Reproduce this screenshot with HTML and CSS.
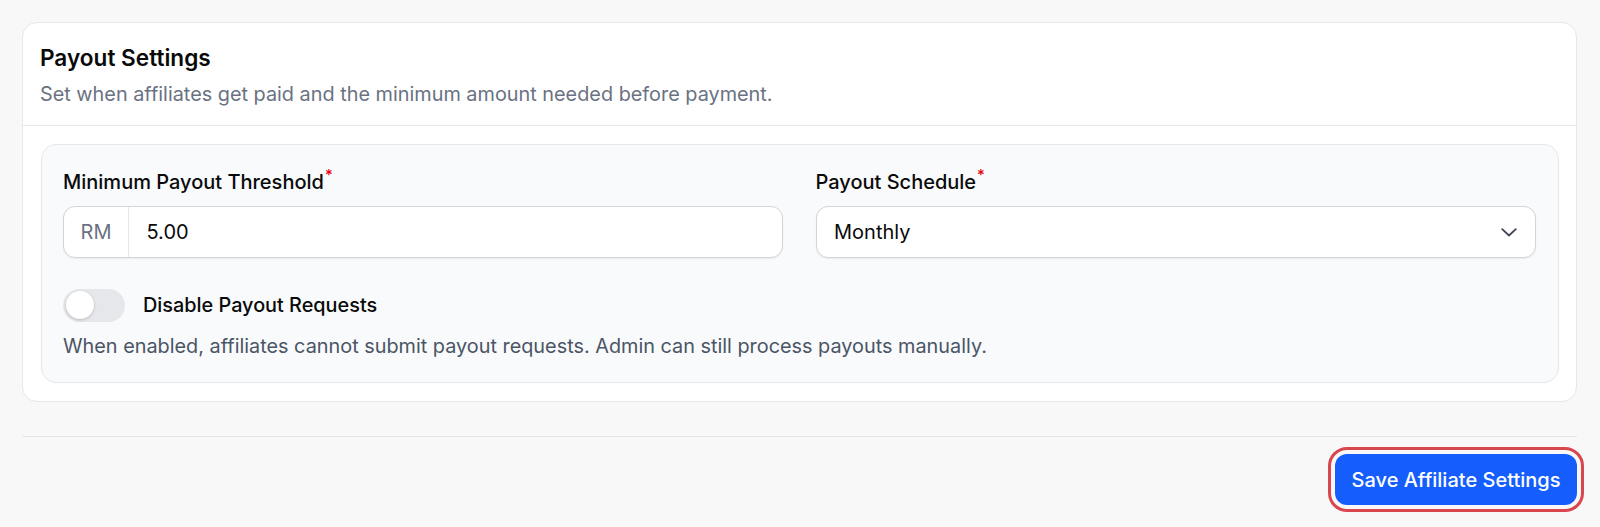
FILE: index.html
```html
<!DOCTYPE html>
<html>
<head>
<meta charset="utf-8">
<link rel="stylesheet" href="styles.css">
</head>
<body>
<div class="page">
  <section class="card">
    <header class="card-head">
      <h2 class="title">Payout Settings</h2>
      <p class="subtitle">Set when affiliates get paid and the minimum amount needed before payment.</p>
    </header>
    <div class="card-body">
      <div class="panel">
        <div class="grid">
          <div class="field">
            <label class="label">Minimum Payout Threshold<span class="req">*</span></label>
            <div class="input-group">
              <span class="addon">RM</span>
              <span class="input-value">5.00</span>
            </div>
          </div>
          <div class="field">
            <label class="label">Payout Schedule<span class="req">*</span></label>
            <div class="select">
              <span class="input-value">Monthly</span>
              <svg class="chev" width="20" height="20" viewBox="0 0 20 20"><path d="M3.2 7.2l6.8 6.3 6.8-6.3" fill="none" stroke="#3f4652" stroke-width="1.8" stroke-linecap="round" stroke-linejoin="round"/></svg>
            </div>
          </div>
        </div>
        <div class="toggle-row">
          <span class="toggle"><span class="knob"></span></span>
          <span class="toggle-label">Disable Payout Requests</span>
        </div>
        <p class="help">When enabled, affiliates cannot submit payout requests. Admin can still process payouts manually.</p>
      </div>
    </div>
  </section>
  <div class="footer">
    <button class="save">Save Affiliate Settings</button>
  </div>
</div>
</body>
</html>
```

FILE: styles.css
```css
* { box-sizing: border-box; }
html, body { margin: 0; padding: 0; }
body {
  background: #f8f8f8;
  font-family: Inter, "Noto Sans", "Liberation Sans", sans-serif;
  color: #0a0a0a;
  width: 1600px;
  height: 527px;
  overflow: hidden;
}
.page { padding: 22px 23px 0 22px; }
.card {
  background: #fff;
  border: 1px solid #e5e7eb;
  border-radius: 15px;
}
.card-head {
  padding: 18.5px 17px 16.5px;
  border-bottom: 1px solid #e5e7eb;
}
.title {
  margin: 0;
  font-size: 22.6px;
  line-height: 32px;
  font-weight: 600;
  color: #0a0a0a;
}
.subtitle {
  margin: 5px 0 0;
  font-size: 19.85px;
  line-height: 30px;
  color: #6a7282;
}
.card-body { padding: 17.5px; }
.panel {
  background: #f9fafb;
  border: 1px solid #e5e7eb;
  border-radius: 15px;
  padding: 22px 22px 21px 21.5px;
}
.grid {
  display: grid;
  grid-template-columns: 1fr 1fr;
  column-gap: 32.5px;
}
.label {
  display: block;
  font-size: 20px;
  line-height: 30px;
  font-weight: 500;
  margin-bottom: 9px;
}
.req {
  color: #e7000b;
  font-size: 15px;
  vertical-align: top;
  line-height: 15px;
  margin-left: 1px;
}
.input-group, .select {
  display: flex;
  align-items: center;
  height: 52px;
  background: #fff;
  border: 1px solid #d1d5dc;
  border-radius: 12px;
  box-shadow: 0 1px 2px rgba(0,0,0,0.06);
}
.addon {
  width: 65px;
  height: 100%;
  display: flex;
  align-items: center;
  justify-content: center;
  border-right: 1px solid #e5e7eb;
  color: #6a7282;
  font-size: 20px;
}
.input-value {
  font-size: 20px;
  color: #0a0a0a;
  padding-left: 17.5px;
}
.select { justify-content: space-between; padding-right: 16px; }
.chev { display: block; }
.toggle-row {
  display: flex;
  align-items: center;
  gap: 18px;
  margin-top: 31px;
}
.toggle {
  width: 62px;
  height: 33px;
  border-radius: 17px;
  background: #e5e7eb;
  display: flex;
  align-items: center;
  padding-left: 2.5px;
}
.knob {
  width: 28px;
  height: 28px;
  border-radius: 50%;
  background: #fff;
  box-shadow: 0 1px 3px rgba(0,0,0,0.2);
}
.toggle-label {
  font-size: 19.85px;
  line-height: 30px;
  font-weight: 500;
}
.help {
  margin: 9.5px 0 0;
  font-size: 19.85px;
  line-height: 30px;
  color: #4a5565;
}
.footer {
  margin-top: 34px;
  border-top: 1px solid #e5e7eb;
  padding-top: 17.5px;
  display: flex;
  justify-content: flex-end;
}
.save {
  font-family: inherit;
  background: #155dfc;
  color: #fff;
  border: none;
  border-radius: 12px;
  height: 51px;
  width: 242px;
  font-size: 20px;
  font-weight: 500;
  outline: 3.5px solid #d9464d;
  outline-offset: 4.5px;
}
```
